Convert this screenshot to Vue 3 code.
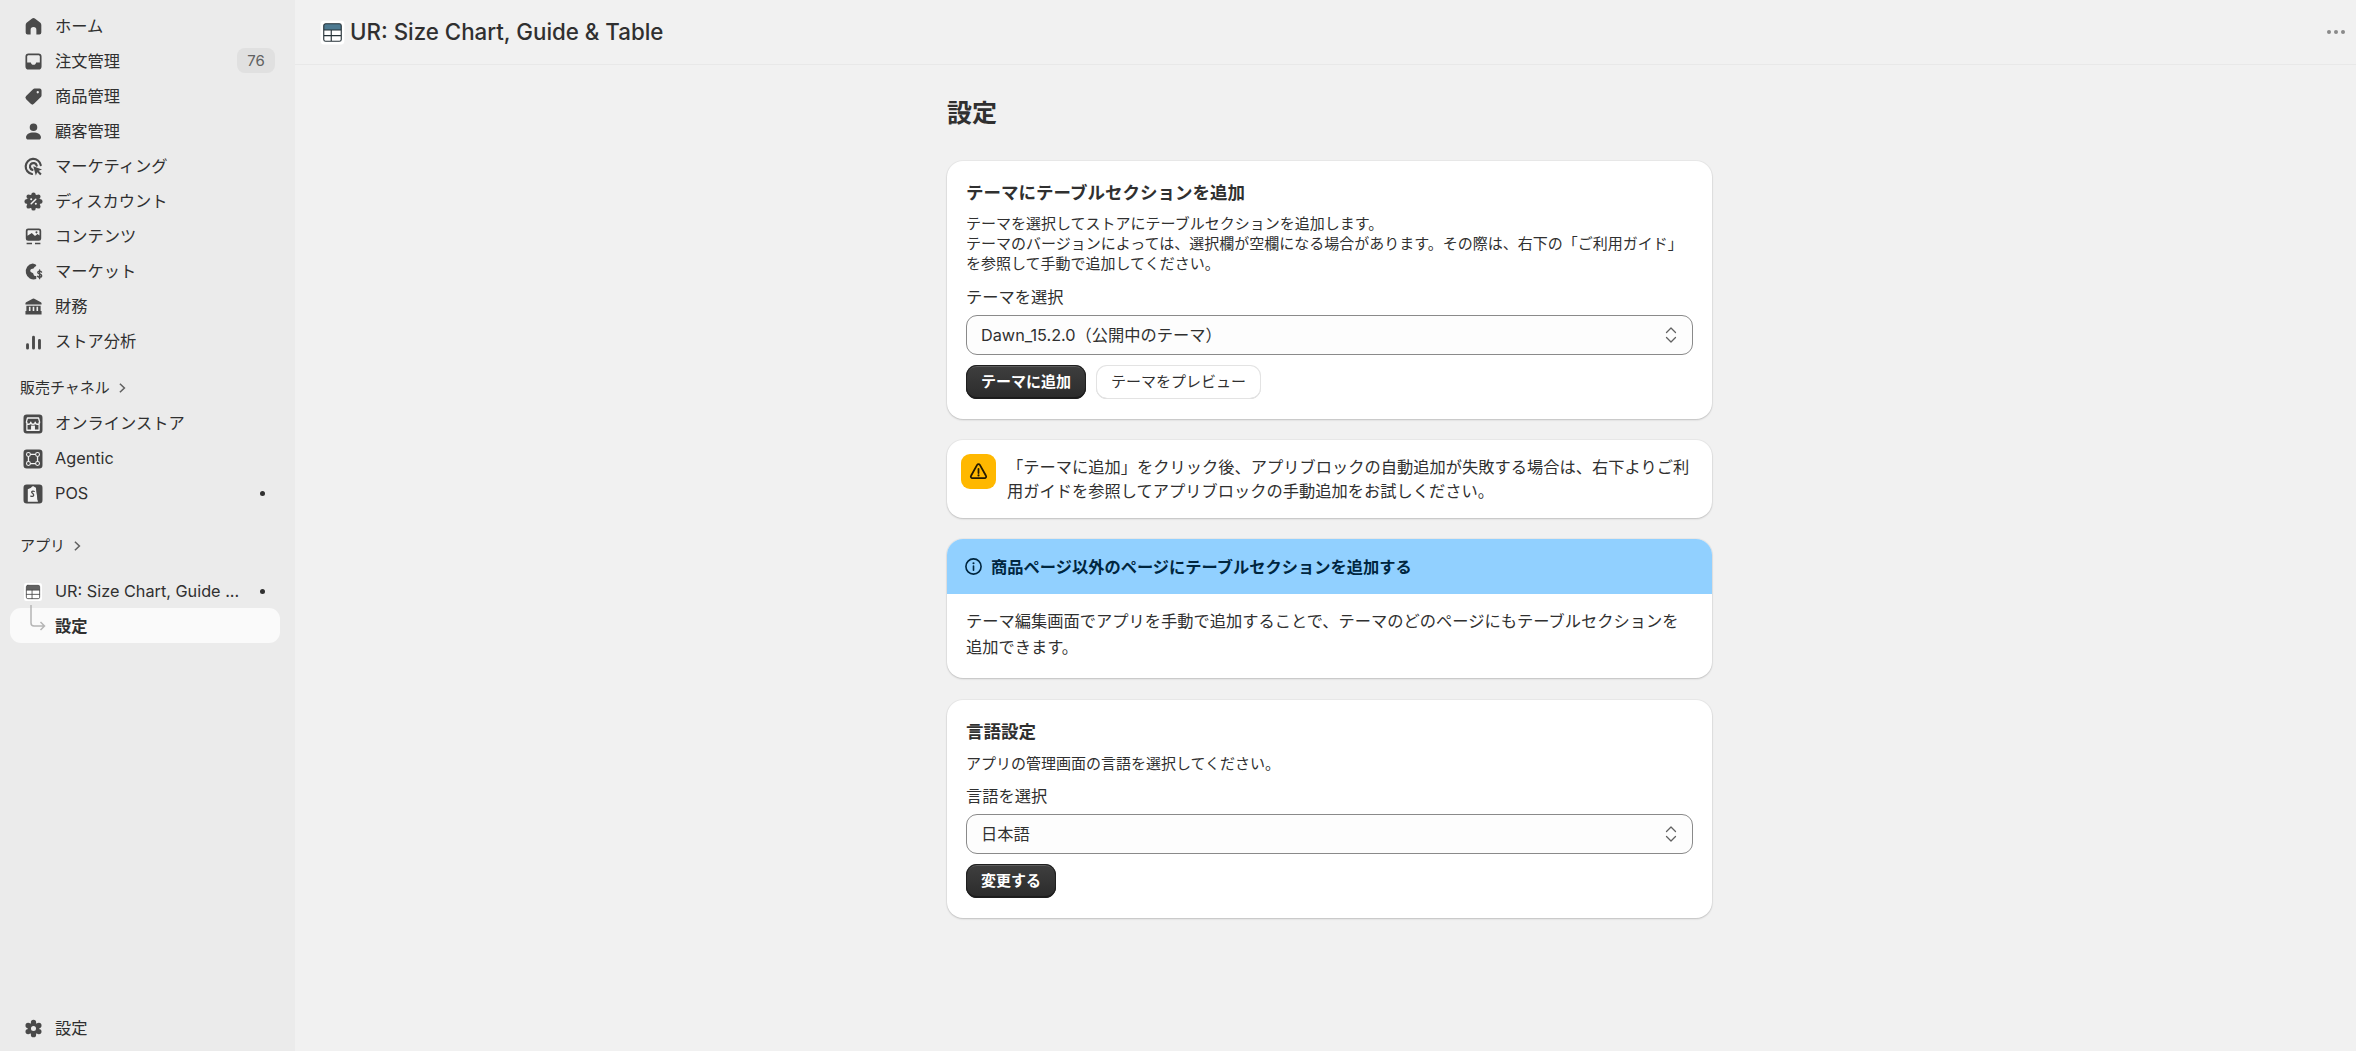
<template>
  <div class="admin">
    <aside class="sidebar">
      <nav class="nav-group">
        <a v-for="item in mainNav" :key="item.label" class="nav-item">
          <svg class="nav-icon" viewBox="0 0 20 20"><path v-for="(p, i) in icons[item.icon]" :key="i" v-bind="p" /></svg>
          <span class="nav-label">{{ item.label }}</span>
          <span v-if="item.badge" class="nav-badge">{{ item.badge }}</span>
        </a>
      </nav>

      <div class="section-label channels-label">販売チャネル
        <svg class="chev" viewBox="0 0 10 10"><path d="M3.5 2l3.2 3-3.2 3" /></svg>
      </div>
      <nav class="nav-group">
        <a v-for="item in channelNav" :key="item.label" class="nav-item">
          <svg class="nav-icon boxed" viewBox="0 0 20 20"><path v-for="(p, i) in icons[item.icon]" :key="i" v-bind="p" /></svg>
          <span class="nav-label">{{ item.label }}</span>
          <span v-if="item.dot" class="nav-dot"></span>
        </a>
      </nav>

      <div class="section-label apps-label">アプリ
        <svg class="chev" viewBox="0 0 10 10"><path d="M3.5 2l3.2 3-3.2 3" /></svg>
      </div>
      <nav class="nav-group app-group">
        <a class="nav-item">
          <svg class="nav-icon boxed" viewBox="-3.7 -3.7 27.4 27.4"><path v-for="(p, i) in icons.tableGrey" :key="i" v-bind="p" /></svg>
          <span class="nav-label">UR: Size Chart, Guide ...</span>
          <span class="nav-dot"></span>
        </a>
        <a class="nav-item active">
          <span class="nav-spacer"></span>
          <span class="nav-label">設定</span>
        </a>
        <svg class="connector" viewBox="0 0 18 28"><path d="M1 1v18a3 3 0 0 0 3 3h10.500M10.500 18l4 4-4 4" /></svg>
      </nav>

      <a class="nav-item settings-item">
        <svg class="nav-icon" viewBox="0 0 20 20"><path v-for="(p, i) in icons.gear" :key="i" v-bind="p" /></svg>
        <span class="nav-label">設定</span>
      </a>
    </aside>

    <div class="main">
      <header class="topbar">
        <svg class="title-icon" viewBox="0 0 20 20"><path v-for="(p, i) in icons.tableBlue" :key="i" v-bind="p" /></svg>
        <span class="app-title">UR: Size Chart, Guide &amp; Table</span>
        <span class="more"><i></i><i></i><i></i></span>
      </header>

      <main class="page">
        <div class="column">
          <h1 class="page-title">設定</h1>

          <section class="card pad">
            <h2 class="card-title">テーマにテーブルセクションを追加</h2>
            <p class="help first">テーマを選択してストアにテーブルセクションを追加します。<br />テーマのバージョンによっては、選択欄が空欄になる場合があります。その際は、右下の「ご利用ガイド」<br />を参照して手動で追加してください。</p>
            <div class="field-label">テーマを選択</div>
            <div class="select">
              <span>Dawn_15.2.0（公開中のテーマ）</span>
              <svg class="select-arrows" viewBox="0 0 12 18"><path d="M1.500 6.500 6 2l4.500 4.500M1.500 11.500 6 16l4.500-4.500" /></svg>
            </div>
            <div class="actions">
              <button class="btn primary theme-btn">テーマに追加</button>
              <button class="btn secondary">テーマをプレビュー</button>
            </div>
          </section>

          <section class="card notice">
            <span class="warn-box">
              <svg viewBox="0 0 20 20"><path class="warn-line" d="M8.700 3.700 2.900 14a1.500 1.500 0 0 0 1.300 2.300h11.600a1.500 1.500 0 0 0 1.300-2.300L11.300 3.700a1.500 1.500 0 0 0-2.600 0Z" /><path class="warn-line" d="M10 7.500v4" /><circle cx="10" cy="13.700" r="1" /></svg>
            </span>
            <p class="notice-text">「テーマに追加」をクリック後、アプリブロックの自動追加が失敗する場合は、右下よりご利用ガイドを参照してアプリブロックの手動追加をお試しください。</p>
          </section>

          <section class="card info-card">
            <div class="info-head">
              <svg class="info-icon" viewBox="0 0 20 20"><circle class="info-line" cx="10" cy="10" r="8" /><path class="info-line" d="M10 9.500v4.500" /><circle class="info-dot" cx="10" cy="6.500" r="1.100" /></svg>
              <span>商品ページ以外のページにテーブルセクションを追加する</span>
            </div>
            <p class="info-body">テーマ編集画面でアプリを手動で追加することで、テーマのどのページにもテーブルセクションを追加できます。</p>
          </section>

          <section class="card pad lang-card">
            <h2 class="card-title">言語設定</h2>
            <p class="help lang">アプリの管理画面の言語を選択してください。</p>
            <div class="field-label lang-label">言語を選択</div>
            <div class="select">
              <span>日本語</span>
              <svg class="select-arrows" viewBox="0 0 12 18"><path d="M1.500 6.500 6 2l4.500 4.500M1.500 11.500 6 16l4.500-4.500" /></svg>
            </div>
            <div class="actions">
              <button class="btn primary lang-btn">変更する</button>
            </div>
          </section>
        </div>
      </main>
    </div>
  </div>
</template>

<script setup>
const dot = (cx, cy, r) => `M${cx - r} ${cy}a${r} ${r} 0 1 0 ${r * 2} 0a${r} ${r} 0 1 0 ${-r * 2} 0Z`;

// 中心の丸＋こぶ（歯車・ディスカウントアイコン用）
const lobes = (n, core, dist, r) => {
  let d = dot(10, 10, core);
  for (let i = 0; i < n; i++) {
    const a = (Math.PI * 2 * i) / n;
    d += dot(+(10 + dist * Math.sin(a)).toFixed(2), +(10 - dist * Math.cos(a)).toFixed(2), r);
  }
  return d;
};

const line = (d, stroke = 'currentColor', w = 1.6) => ({
  d, fill: 'none', stroke, 'stroke-width': w, 'stroke-linecap': 'round', 'stroke-linejoin': 'round'
});
const box = { d: 'M5.200 2.700h9.600a2.500 2.500 0 0 1 2.500 2.500v9.600a2.500 2.500 0 0 1-2.500 2.500H5.200a2.500 2.500 0 0 1-2.500-2.500V5.200a2.500 2.500 0 0 1 2.500-2.500Z' };
const white = '#f3f3f3';

const tableIcon = (rowFill, lineColor) => [
  { d: 'M3 .5h14A2.500 2.500 0 0 1 19.500 3v14a2.500 2.500 0 0 1-2.500 2.500H3A2.500 2.500 0 0 1 .5 17V3A2.500 2.500 0 0 1 3 .5Z', fill: '#fff' },
  { d: 'M4.500 3h11A1.500 1.500 0 0 1 17 4.500V8H3V4.500A1.500 1.500 0 0 1 4.500 3Z', fill: rowFill },
  line('M4.500 3h11A1.500 1.500 0 0 1 17 4.500v11a1.500 1.500 0 0 1-1.500 1.500h-11A1.500 1.500 0 0 1 3 15.500v-11A1.500 1.500 0 0 1 4.500 3ZM3 8h14M3 12.500h14M9 8v9', lineColor, 0.9)
];

const icons = {
  home: [{ d: 'M8.800 3 4 6.800A2.500 2.500 0 0 0 3.200 8.600v6.700A1.700 1.700 0 0 0 4.900 17h2.600v-4a2.500 2.500 0 0 1 5 0v4h2.600a1.700 1.700 0 0 0 1.700-1.700V8.600a2.500 2.500 0 0 0-.8-1.800L11.200 3a2 2 0 0 0-2.400 0Z' }],
  inbox: [{ 'fill-rule': 'evenodd', d: 'M5.700 3h8.600A2.700 2.700 0 0 1 17 5.700v8.600a2.700 2.700 0 0 1-2.700 2.700H5.700A2.700 2.700 0 0 1 3 14.300V5.700A2.700 2.700 0 0 1 5.700 3Zm-1.200 7.800h3.200c.3 1.300 1 2 2.300 2s2-.7 2.300-2h3.200V5.700c0-.7-.5-1.200-1.200-1.200H5.700c-.7 0-1.200.5-1.200 1.200v5.100Z' }],
  tag: [{ 'fill-rule': 'evenodd', d: 'M11 3h4.300A1.700 1.700 0 0 1 17 4.700V9a2 2 0 0 1-.6 1.400l-6 6a2 2 0 0 1-2.800 0l-4-4a2 2 0 0 1 0-2.800l6-6A2 2 0 0 1 11 3Zm2.700 2.300a1 1 0 1 0 0 2 1 1 0 0 0 0-2Z' }],
  person: [{ d: 'M10 3a3.300 3.300 0 1 1 0 6.600A3.300 3.300 0 0 1 10 3ZM3.500 15.200c0-2.600 2.700-4.300 6.500-4.300s6.500 1.700 6.500 4.300c0 1-.8 1.800-1.800 1.800H5.300c-1 0-1.800-.8-1.800-1.800Z' }],
  target: [
    line('M16.300 8.800a6.600 6.600 0 1 0-7.600 7.700', 'currentColor', 1.900),
    line('M12.800 9.200a3 3 0 1 0-3.700 3.700', 'currentColor', 1.900),
    { d: 'M9.800 9.800l7.600 2.700-2.900 1.300 2.600 2.500-1.300 1.300-2.500-2.600-1.300 2.900Z' }
  ],
  discount: [
    { d: lobes(8, 6.200, 6, 1.900) },
    line('M8 12l4-4', white, 1.300),
    { d: dot(8, 8, 0.9) + dot(12, 12, 0.9), fill: white }
  ],
  content: [
    { d: 'M5.300 3h9.400a2 2 0 0 1 2 2v6.700a2 2 0 0 1-2 2H5.300a2 2 0 0 1-2-2V5a2 2 0 0 1 2-2Z' },
    { d: 'M4.800 9.300V5.300c0-.5.400-.8.800-.8h8.800c.4 0 .8.300.8.800v3.800l-1.700-1.200-2.200 1.600-2.800-2.600-3.700 2.400Z', fill: white },
    { d: dot(12.600, 6.400, 0.9) },
    { d: 'M4 15.500h4.700v1.200H4ZM11.300 15.500H16v1.200h-4.700Z' }
  ],
  market: [
    { d: 'M9.300 3a7 7 0 1 0 3.100 13.600V14c-1.200 0-2.400-.6-2.400-1.700 0-1.300-2.100-1-2.700-2.300-.5-1.200.6-2.300 1.800-2.300 1.600 0 1.300-1.500 2.500-2 .7-.3 1-.8.600-1.500A7 7 0 0 0 9.300 3Z' },
    line('M17 10.500c-.4-.6-1-.8-1.700-.8-.9 0-1.600.5-1.600 1.200 0 1.700 3.400.9 3.400 2.700 0 .8-.8 1.300-1.800 1.300-.7 0-1.300-.3-1.700-.8M15.300 8.600v7.600', 'currentColor', 1.200)
  ],
  bank: [{ 'fill-rule': 'evenodd', d: 'M9.300 3.200 3.600 6.200c-.4.200-.6.600-.6 1v1.100h14V7.200c0-.4-.2-.8-.6-1L10.700 3.200a1.500 1.500 0 0 0-1.400 0ZM3.800 9.300h12.400v4.700h.8V17H3v-3h.8V9.300Zm2.200 1v3.700h1.400v-3.700H6Zm3.300 0v3.700h1.400v-3.700H9.300Zm3.300 0v3.700H14v-3.700h-1.400Z' }],
  bars: [line('M4.800 12.800v3M10 6.300v9.500M15.200 9v6.800', 'currentColor', 2.500)],
  store: [
    box,
    line('M5.300 8.800v6h9.400v-6M4.900 8.500l.8-3.100h8.600l.8 3.100a1.700 1.700 0 0 1-3.400 0 1.700 1.700 0 0 1-3.400 0 1.700 1.700 0 0 1-3.400 0Z', white, 1),
    { d: 'M8.500 11.200h3v3.600h-3Z', fill: white }
  ],
  agentic: [
    box,
    line('M6.500 6.500h7v7h-7Z', white, 1),
    { d: dot(6.500, 6.500, 1.500) + dot(13.500, 6.500, 1.500) + dot(6.500, 13.500, 1.500) + dot(13.500, 13.500, 1.500), fill: '#4a4a4a', stroke: white, 'stroke-width': 0.8 }
  ],
  pos: [
    box,
    { d: 'M6 6.300 8.500 5.200c.5-1 1.200-1.200 2-1.200l1 .8.800.4 1.500 10.800-7.800 0Z', fill: white },
    line('M11 8c-.5-.4-1.600-.4-2 .3-.5 1 1.800 1.400 1.500 2.800-.2.900-1.300 1-2.200.5', '#4a4a4a', 1),
    line('M12.800 5.500l1 9', '#4a4a4a', .7)
  ],
  tableGrey: tableIcon('#616161', '#4a4a4a'),
  tableBlue: tableIcon('#4d7a91', '#263238'),
  gear: [
    { d: lobes(6, 5.200, 5.400, 2.300) },
    { d: dot(10, 10, 2.200), fill: '#ebebeb' }
  ]
};

const mainNav = [
  { label: 'ホーム', icon: 'home' },
  { label: '注文管理', icon: 'inbox', badge: 76 },
  { label: '商品管理', icon: 'tag' },
  { label: '顧客管理', icon: 'person' },
  { label: 'マーケティング', icon: 'target' },
  { label: 'ディスカウント', icon: 'discount' },
  { label: 'コンテンツ', icon: 'content' },
  { label: 'マーケット', icon: 'market' },
  { label: '財務', icon: 'bank' },
  { label: 'ストア分析', icon: 'bars' }
];

const channelNav = [
  { label: 'オンラインストア', icon: 'store' },
  { label: 'Agentic', icon: 'agentic' },
  { label: 'POS', icon: 'pos', dot: true }
];
</script>

<style>
html, body { margin: 0; background: #f1f1f1; }
</style>

<style scoped>
.admin {
  display: flex;
  height: 1051px;
  overflow: hidden;
  color: #303030;
  font-family: Inter, "Noto Sans CJK JP", sans-serif;
  font-size: 16.250px;
  line-height: 24px;
}

/* サイドバー */
.sidebar {
  width: 295px;
  flex: none;
  box-sizing: border-box;
  display: flex;
  flex-direction: column;
  padding-top: 8px;
  background: #ebebeb;
}
.nav-group { display: flex; flex-direction: column; }
.nav-item {
  display: flex;
  align-items: center;
  width: 270px;
  height: 35px;
  box-sizing: border-box;
  margin-left: 10px;
  padding: 0 5px 0 11.500px;
  border-radius: 11px;
}
.nav-icon { width: 23px; height: 23px; flex: none; margin-right: 10.500px; margin-top: 2px; color: #4a4a4a; fill: currentColor; }
.nav-icon.boxed { width: 26px; height: 26px; margin-left: -1.500px; margin-right: 9px; }
.nav-spacer { width: 33.500px; flex: none; }
.nav-label { white-space: nowrap; }
.nav-badge {
  margin-left: auto;
  width: 38px;
  height: 25px;
  border-radius: 8px;
  background: #e0e0e0;
  color: #616161;
  font-size: 15px;
  line-height: 25px;
  text-align: center;
}
.nav-dot {
  width: 5px;
  height: 5px;
  margin: 2px 10px 0 auto;
  border-radius: 50%;
  background: #303030;
}
.section-label {
  display: flex;
  align-items: center;
  height: 35px;
  padding-left: 20px;
  font-size: 15px;
}
.channels-label { margin-top: 12px; }
.apps-label { margin-top: 18px; }
.chev { width: 14px; height: 14px; margin-left: 5px; fill: none; stroke: #616161; stroke-width: 1.100; }
.app-group { position: relative; margin-top: 10px; }
.active { background: #fafafa; font-weight: 600; }
.connector {
  position: absolute;
  left: 30px;
  top: 31px;
  width: 18px;
  height: 28px;
  fill: none;
  stroke: #b5b5b5;
  stroke-width: 1.500;
}
.settings-item { margin-top: auto; margin-bottom: 6px; }

/* 上部バー */
.main { flex: 1; min-width: 0; display: flex; flex-direction: column; }
.topbar {
  display: flex;
  align-items: center;
  height: 64px;
  padding: 0 11px 0 25px;
  border-bottom: 1px solid #e8e8e8;
}
.title-icon { width: 25px; height: 25px; margin-right: 5px; }
.app-title { font-size: 22.300px; font-weight: 500; }
.more { display: flex; gap: 3px; margin-left: auto; }
.more i { width: 4px; height: 4px; border-radius: 50%; background: #8a8a8a; }

/* ページ本体 */
.page { display: flex; justify-content: center; padding: 30px 0 0 8px; }
.column { width: 765px; display: flex; flex-direction: column; gap: 21px; }
.page-title { margin: 0 0 9px; font-size: 25px; line-height: 36px; font-weight: 700; }
.card {
  background: #fff;
  border-radius: 16px;
  box-shadow: 0 1px 2px rgba(0, 0, 0, 0.18), 0 0 0 1px rgba(0, 0, 0, 0.03);
}
.pad { padding: 20px 19px; }
.lang-card { margin-top: 1px; }
.card-title { margin: 0; font-size: 17.500px; line-height: 24px; font-weight: 600; }
.help { margin: 0; font-size: 15px; line-height: 20px; }
.help.first { margin-top: 9px; }
.help.lang { margin-top: 10px; }
.field-label { margin-top: 11px; margin-bottom: 6px; }
.lang-label { margin-top: 10px; }
.select {
  display: flex;
  align-items: center;
  justify-content: space-between;
  height: 40px;
  box-sizing: border-box;
  padding: 0 15px 0 14px;
  border: 1px solid #8a8a8a;
  border-radius: 11px;
  background: #fdfdfd;
}
.select-arrows { width: 12px; height: 18px; fill: none; stroke: #616161; stroke-width: 1.300; stroke-linecap: round; stroke-linejoin: round; }
.actions { display: flex; gap: 10px; margin-top: 10px; }
.btn {
  height: 34px;
  padding: 0;
  border: 0;
  border-radius: 11px;
  font-family: inherit;
  font-size: 15px;
  line-height: 20px;
}
.primary {
  color: #fff;
  font-weight: 600;
  background: linear-gradient(#3f3f3f, #2b2b2b);
  box-shadow: inset 0 0 0 1px #1f1f1f, inset 0 2px 0 rgba(255, 255, 255, 0.16), inset 0 -2px 0 rgba(0, 0, 0, 0.35);
}
.theme-btn { width: 120px; }
.lang-btn { width: 90px; }
.secondary {
  width: 165px;
  color: #303030;
  background: #fff;
  box-shadow: inset 0 0 0 1px #e3e3e3, inset 0 -1px 0 #cfcfcf;
}

/* 注意カード */
.notice { display: flex; padding: 14px 14px 15px; gap: 11px; }
.warn-box {
  display: flex;
  align-items: center;
  justify-content: center;
  width: 35px;
  height: 35px;
  flex: none;
  border-radius: 9px;
  background: #ffb800;
}
.warn-box svg { width: 21px; height: 21px; fill: #251a00; }
.warn-line { fill: none; stroke: #251a00; stroke-width: 1.700; stroke-linecap: round; stroke-linejoin: round; }
.notice-text { flex: 1; margin: 1px 0 0; }

/* お知らせカード */
.info-card { overflow: hidden; }
.info-head {
  display: flex;
  align-items: center;
  gap: 8px;
  height: 55px;
  padding-left: 17px;
  background: #91d0ff;
  font-weight: 600;
  color: #00263f;
}
.info-icon { width: 19px; height: 19px; }
.info-line { fill: none; stroke: #00263f; stroke-width: 1.700; stroke-linecap: round; }
.info-dot { fill: #00263f; }
.info-body { margin: 0; padding: 14px 19px 18px; line-height: 26px; }
</style>
